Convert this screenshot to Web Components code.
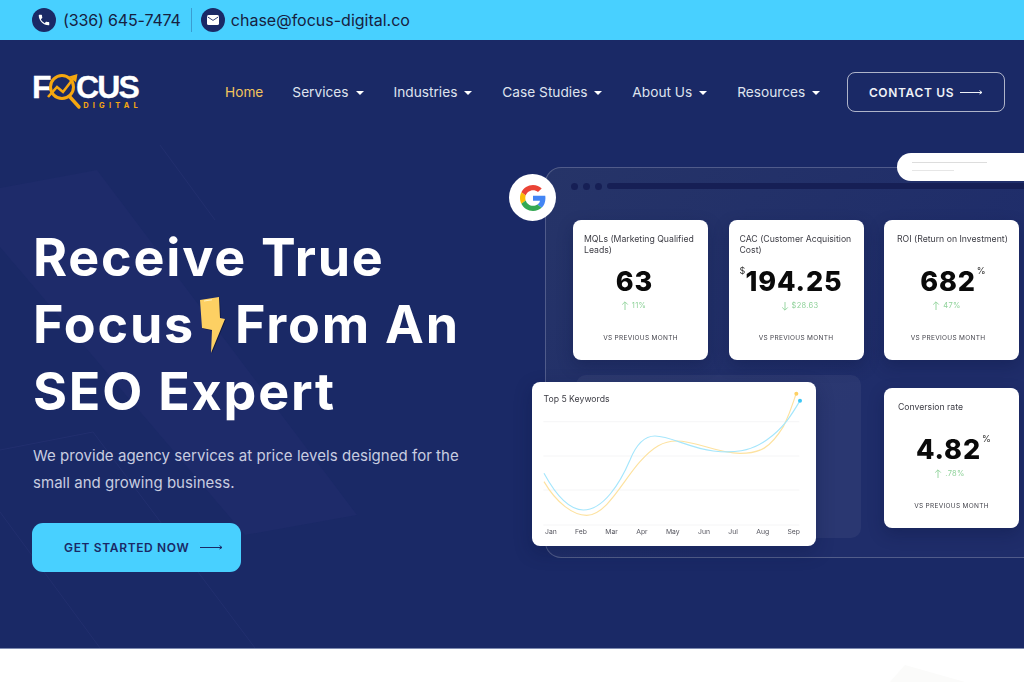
<!DOCTYPE html>
<html lang="en">
<head>
<meta charset="utf-8">
<title>Focus Digital</title>
<style>
  html, body { margin: 0; background: #fff; overflow: hidden; }
  body { font-family: Inter, "Liberation Sans", sans-serif; }
</style>
</head>
<body>
<top-bar></top-bar>
<hero-section>
  <site-nav slot="nav"></site-nav>
  <hero-copy slot="copy"></hero-copy>
  <dash-panel slot="panel"></dash-panel>
</hero-section>
<page-foot></page-foot>
<script>
const ARROW = `<svg width="23" height="9" viewBox="0 0 23 9" fill="none" stroke="currentColor" stroke-width="1"><path d="M0 4.5h22M19.500 2.500 22 4.500l-2.500 1.500"/></svg>`

// every element here just renders a fixed string into an open shadow root
class BaseEl extends HTMLElement {
  connectedCallback() {
    if (!this.shadowRoot) this.attachShadow({ mode: 'open' })
    this.shadowRoot.innerHTML = this.render()
  }
}

class TopBar extends BaseEl {
  render() {
    return `<style>
      :host { display: flex; align-items: center; height: 40px; padding-left: 32px; background: #48d0ff; color: #1a2966; font-size: 16px; }
      .ic { width: 24px; height: 24px; border-radius: 50%; background: #1a2966; display: flex; align-items: center; justify-content: center; flex: none; }
      .txt { color: #17213f; margin-left: 7px; white-space: nowrap; }
      .phone { letter-spacing: -.14px; }
      .sep { width: 1px; height: 24px; background: rgba(26,41,102,.3); margin: 0 9px 0 10px; }
      .mail { margin-left: 6px; }
    </style>
    <span class="ic"><svg width="14" height="14" viewBox="0 0 24 24" fill="#fff"><path d="M6.6 10.8c1.4 2.8 3.8 5.1 6.6 6.6l2.2-2.2c.3-.3.7-.4 1-.2 1.1.4 2.3.6 3.6.6.6 0 1 .4 1 1V20c0 .6-.4 1-1 1C10.6 21 3 13.4 3 4c0-.6.4-1 1-1h3.5c.6 0 1 .4 1 1 0 1.3.2 2.5.6 3.6.1.3 0 .7-.2 1z"/></svg></span>
    <span class="txt phone">(336) 645-7474</span>
    <span class="sep"></span>
    <span class="ic"><svg width="12" height="10" viewBox="0 0 12 10"><rect width="12" height="10" rx="1.6" fill="#fff"/><path d="M.8 2 6 5.4 11.2 2" fill="none" stroke="#1a2966" stroke-width=".9"/></svg></span>
    <span class="txt mail">chase@focus-digital.co</span>`
  }
}

class FocusLogo extends BaseEl {
  render() {
    return `<style>
      :host { display: inline-flex; flex-direction: column; width: 107px; font-family: "Liberation Sans", sans-serif; }
      .word { display: flex; align-items: flex-start; height: 26px; color: #fff; font-size: 32px; font-weight: 700; line-height: 26px; -webkit-text-stroke: .3px #fff; }
      .f { width: 15px; }
      .word svg { flex: none; overflow: visible; }
      .cus { letter-spacing: -1.8px; margin-left: -2px; }
      .sub { align-self: flex-end; margin-top: 1px; color: #f5a70f; font: 700 7.5px/9px Inter, sans-serif; letter-spacing: 4.2px; margin-right: -3px; }
    </style>
    <div class="word"><span class="f">F</span><svg width="31" height="26" viewBox="0 0 31 26" fill="none" stroke="#f5a70f"><circle cx="15" cy="13" r="11.5" stroke-width="3"/><path d="M23 23 32 33" stroke-width="3.4" stroke-linecap="round"/><path d="M1 23 10 13l6 5L26 5" stroke-width="2.6"/><path d="M22 2.5 30.5 0 29 8.500z" fill="#f5a70f" stroke="none"/></svg><span class="cus">CUS</span></div>
    <div class="sub">DIGITAL</div>`
  }
}

class NavLink extends BaseEl {
  render() {
    const caret = this.hasAttribute('menu') ? '<i></i>' : ''
    return `<style>
      :host { display: inline-flex; align-items: center; gap: 7px; font-size: 13.7px; color: #dfe3ee; white-space: nowrap; }
      :host([active]) { color: #f2c45c; margin-right: -1px; }
      i { width: 0; height: 0; border: 4px solid transparent; border-top: 4px solid #fff; border-bottom: 0; margin-top: 2px; }
    </style><slot></slot>${caret}`
  }
}

class ActionButton extends BaseEl {
  render() {
    return `<style>
      :host { display: inline-flex; align-items: center; box-sizing: border-box; font-weight: 600; font-size: 12px; letter-spacing: .65px; white-space: nowrap; }
      :host([kind=outline]) { width: 158px; height: 40px; justify-content: center; gap: 6px; border: 1px solid rgba(255,255,255,.65); border-radius: 8px; color: #eef1f7; }
      :host([kind=solid]) { width: 209px; height: 49px; padding-left: 32px; gap: 11px; border-radius: 11px; background: #48d0ff; color: #1a2966; }
    </style><slot></slot>${ARROW}`
  }
}

class SiteNav extends BaseEl {
  render() {
    return `<style>
      :host { display: flex; align-items: center; padding: 32px 19px 0 32px; position: relative; }
      nav { display: flex; align-items: center; gap: 30px; margin-left: 86px; }
      action-button { margin-left: auto; }
    </style>
    <focus-logo></focus-logo>
    <nav>
      <nav-link active>Home</nav-link>
      <nav-link menu>Services</nav-link>
      <nav-link menu>Industries</nav-link>
      <nav-link menu>Case Studies</nav-link>
      <nav-link menu>About Us</nav-link>
      <nav-link menu>Resources</nav-link>
    </nav>
    <action-button kind="outline">CONTACT US</action-button>`
  }
}

class HeroCopy extends BaseEl {
  render() {
    return `<style>
      :host { display: block; box-sizing: border-box; width: 513px; flex: none; padding: 112px 0 0 32px; color: #fff; }
      h1 { margin: 0 0 17px 1px; font-size: 52px; line-height: 67px; font-weight: 700; letter-spacing: 1.8px; white-space: nowrap; }
      h1 svg { vertical-align: -11px; margin: 0 9px 0 3px; }
      p { width: 440px; margin: 0 0 27px 1px; font-size: 15px; line-height: 27px; letter-spacing: .04px; color: #c8cde0; }
    </style>
    <h1>Receive True<br>Focus<svg width="28" height="58" viewBox="0 0 28 58"><path d="M2 4 21 1l1 21 5 1-14 34 1-23-10-2z" fill="#0f1740" transform="translate(.8 .8)"/><path d="M2 4 21 1l1 21 5 1-14 34 1-23-10-2z" fill="#fdd063"/><path d="M6 5 14 3.800" stroke="#fff3c4" stroke-width="1"/></svg>From An<br>SEO Expert</h1>
    <p>We provide agency services at price levels designed for the small and growing business.</p>
    <action-button kind="solid">GET STARTED NOW</action-button>`
  }
}

class MetricCard extends BaseEl {
  render() {
    const pad = this.getAttribute('pad') || 11
    const unit = this.getAttribute('unit') || ''
    const pre = this.getAttribute('pre') || ''
    // the source picture doesn't centre these exactly, so nudge per card
    const vs = this.getAttribute('vs') || 0
    const ds = this.getAttribute('ds') || 0
    const fs = this.getAttribute('fs') || 0
    const arrow = this.getAttribute('dir') === 'down' ? 'M4 1v8M1.2 6.4 4 9.2l2.8-2.8' : 'M4 9V1M1.2 3.6 4 .8l2.8 2.8'
    return `<style>
      :host { display: flex; flex-direction: column; align-items: center; box-sizing: border-box; width: 135px; height: 140px; padding: 14px 0 0; background: #fff; border-radius: 8px; box-shadow: 0 6px 16px rgba(10,20,60,.3); color: #111; }
      .t { align-self: stretch; box-sizing: border-box; height: 28px; padding-left: ${pad}px; padding-right: 6px; font-size: 8.7px; line-height: 11px; color: #3c3c44; }
      .v { position: relative; margin: 3px 0 0 ${vs}px; font-size: 27px; line-height: 34px; font-weight: 800; letter-spacing: .9px; color: #0a0a0a; }
      sup { position: absolute; top: 1px; font-size: 9px; font-weight: 400; line-height: 10px; letter-spacing: 0; color: #333; }
      .u { left: 100%; margin-left: 1px; }
      .p { right: 100%; }
      .d { display: flex; align-items: center; gap: 3px; margin: 2px 0 0 ${ds}px; font-size: 7.5px; line-height: 10px; color: #8fd29a; letter-spacing: .3px; }
      .f { margin: 23px 0 0 ${fs}px; font-size: 6.5px; line-height: 9px; letter-spacing: .3px; color: #44444c; white-space: nowrap; }
    </style>
    <div class="t"><slot></slot></div>
    <div class="v">${pre ? `<sup class="p">${pre}</sup>` : ''}${this.getAttribute('value')}${unit ? `<sup class="u">${unit}</sup>` : ''}</div>
    <div class="d"><svg width="8" height="10" viewBox="0 0 8 10" fill="none" stroke="#8fd29a" stroke-width=".9"><path d="${arrow}"/></svg>${this.getAttribute('delta')}</div>
    <div class="f">VS PREVIOUS MONTH</div>`
  }
}

class KeywordChart extends BaseEl {
  render() {
    const months = ['Jan', 'Feb', 'Mar', 'Apr', 'May', 'Jun', 'Jul', 'Aug', 'Sep']
    return `<style>
      :host { display: grid; box-sizing: border-box; width: 284px; height: 164px; background: #fff; border-radius: 8px; box-shadow: 0 6px 18px rgba(10,20,60,.3); overflow: hidden; }
      svg { grid-area: 1 / 1; display: block; }
      .t { grid-area: 1 / 1; padding: 12px 0 0 11.5px; font-size: 8.7px; line-height: 11px; color: #3c3c44; }
      .m { grid-area: 1 / 1; align-self: end; display: flex; justify-content: space-between; padding: 0 16px 10px 13px; font-size: 6.8px; line-height: 9px; color: #55555e; }
    </style>
    <svg width="284" height="164" viewBox="36 36 852 492" fill="none">
      <path d="M70 155H838M70 258H838M70 360H838M70 465H838" stroke="#f0f0f2" stroke-width="2"/>
      <path d="M72 335C110 400 160 436 200 436C260 436 310 330 360 275C400 230 430 213 470 213C530 213 590 250 660 250C720 250 750 235 790 170C810 130 815 110 828 72" stroke="#fde2a0" stroke-width="3.5"/>
      <path d="M72 310C110 380 150 420 190 420C250 420 300 340 330 270C350 220 375 198 405 198C450 198 510 235 580 243C640 250 690 245 740 210C790 175 815 135 840 92" stroke="#a5e6fc" stroke-width="3.5"/>
      <circle cx="829" cy="71" r="6" fill="#fdd063"/><circle cx="840" cy="92" r="6" fill="#3cc6f5"/>
    </svg>
    <div class="t">Top 5 Keywords</div>
    <div class="m">${months.map(m => `<span>${m}</span>`).join('')}</div>`
  }
}

class DashPanel extends BaseEl {
  render() {
    return `<style>
      :host { display: block; position: relative; box-sizing: border-box; width: 520px; height: 391px; margin-top: 55px; margin-left: 32px; padding: 14px 0 0 27px; flex: none; border: 1px solid rgba(255,255,255,.22); border-right: 0; border-radius: 16px 0 0 16px; background: linear-gradient(135deg, #263468, #1f2d6a 60%); filter: blur(.3px); }
      .chrome { display: flex; align-items: center; gap: 5px; height: 8px; margin-left: -2px; }
      .chrome b { width: 7px; height: 7px; border-radius: 50%; background: #161f55; }
      .chrome u { flex: 1; height: 6px; margin: 0 1px 0 0; border-radius: 3px; background: #161f55; }
      .cards { display: grid; grid-template-columns: repeat(3, 135px); column-gap: 20.5px; row-gap: 28px; margin-top: 30px; }
      .c3 { grid-column: 3; }
      /* these sit over the panel frame */
      .pill { position: absolute; left: 351px; top: -15px; width: 200px; height: 28px; border-radius: 14px; background: #fff; }
      .pill i { display: block; height: 1px; background: #ddd; margin: 9px 0 0 15px; width: 75px; }
      .pill i + i { margin-top: 7px; width: 42px; background: #e6e6e6; }
      .g { position: absolute; left: -37px; top: 6px; width: 47px; height: 47px; border-radius: 50%; background: #fff; display: flex; align-items: center; justify-content: center; }
      .shade { position: absolute; left: 30px; top: 207px; width: 285px; height: 163px; border-radius: 10px; background: rgba(255,255,255,.05); }
      keyword-chart { position: absolute; left: -14px; top: 214px; }
    </style>
    <div class="chrome"><b></b><b></b><b></b><u></u></div>
    <div class="pill"><i></i><i></i></div>
    <div class="g"><svg width="26" height="26" viewBox="0 0 48 48"><path fill="#EA4335" d="M24 9.5c3.54 0 6.71 1.22 9.21 3.6l6.85-6.85C35.9 2.38 30.47 0 24 0 14.62 0 6.51 5.38 2.56 13.22l7.98 6.19C12.43 13.72 17.74 9.5 24 9.5z"/><path fill="#4285F4" d="M46.98 24.55c0-1.57-.15-3.09-.38-4.55H24v9.02h12.94c-.58 2.96-2.26 5.48-4.78 7.18l7.73 6c4.51-4.18 7.09-10.36 7.09-17.65z"/><path fill="#FBBC05" d="M10.53 28.59c-.48-1.45-.76-2.99-.76-4.59s.27-3.14.76-4.59l-7.98-6.19C.92 16.46 0 20.12 0 24c0 3.88.92 7.54 2.56 10.78l7.97-6.19z"/><path fill="#34A853" d="M24 48c6.48 0 11.93-2.13 15.89-5.81l-7.73-6c-2.15 1.45-4.92 2.3-8.16 2.3-6.26 0-11.57-4.22-13.47-9.91l-7.98 6.19C6.51 42.62 14.62 48 24 48z"/></svg></div>
    <div class="cards">
      <metric-card value="63" delta="11%" vs="-12" ds="-14">MQLs (Marketing Qualified Leads)</metric-card>
      <metric-card value="194.25" pre="$" delta="$28.63" dir="down" vs="-4" ds="7">CAC (Customer Acquisition Cost)</metric-card>
      <metric-card value="682" unit="%" delta="47%" pad="13" vs="-7" ds="-10" fs="-7">ROI (Return on Investment)</metric-card>
      <metric-card class="c3" value="4.82" unit="%" delta=".78%" pad="14" vs="-6" ds="-4">Conversion rate</metric-card>
    </div>
    <div class="shade"></div>
    <keyword-chart></keyword-chart>`
  }
}

class HeroSection extends BaseEl {
  render() {
    return `<style>
      :host { display: block; position: relative; box-sizing: border-box; height: 609px; background: #1a2966; border-bottom: 1px solid #7e8bb0; overflow: hidden; }
      .deco { position: absolute; inset: 0; }
      .main { display: flex; position: relative; }
      .top { position: relative; z-index: 2; }
    </style>
    <svg class="deco" width="1024" height="608" fill="none">
      <path d="M0 148 97 130 357 475 245 495 0 207z" fill="#1e2b6a"/>
      <path d="M0 410 93 392 255 608M0 472 100 608M160 105 215 180" stroke="#222f6e"/>
    </svg>
    <div class="top"><slot name="nav"></slot></div>
    <div class="main"><slot name="copy"></slot><slot name="panel"></slot></div>`
  }
}

// white strip under the hero, with the top of the next section's faint shape
class PageFoot extends BaseEl {
  render() {
    return `<style>
      :host { display: block; height: 33px; overflow: hidden; }
      svg { display: block; }
    </style>
    <svg width="1024" height="33"><path d="M905 16 965 33H890z" fill="#fbfbfa"/></svg>`
  }
}

// children first, so the elements are upgraded as soon as they are parsed
customElements.define('focus-logo', FocusLogo)
customElements.define('nav-link', NavLink)
customElements.define('action-button', ActionButton)
customElements.define('metric-card', MetricCard)
customElements.define('keyword-chart', KeywordChart)
customElements.define('top-bar', TopBar)
customElements.define('site-nav', SiteNav)
customElements.define('hero-copy', HeroCopy)
customElements.define('dash-panel', DashPanel)
customElements.define('hero-section', HeroSection)
customElements.define('page-foot', PageFoot)
</script>
</body>
</html>
